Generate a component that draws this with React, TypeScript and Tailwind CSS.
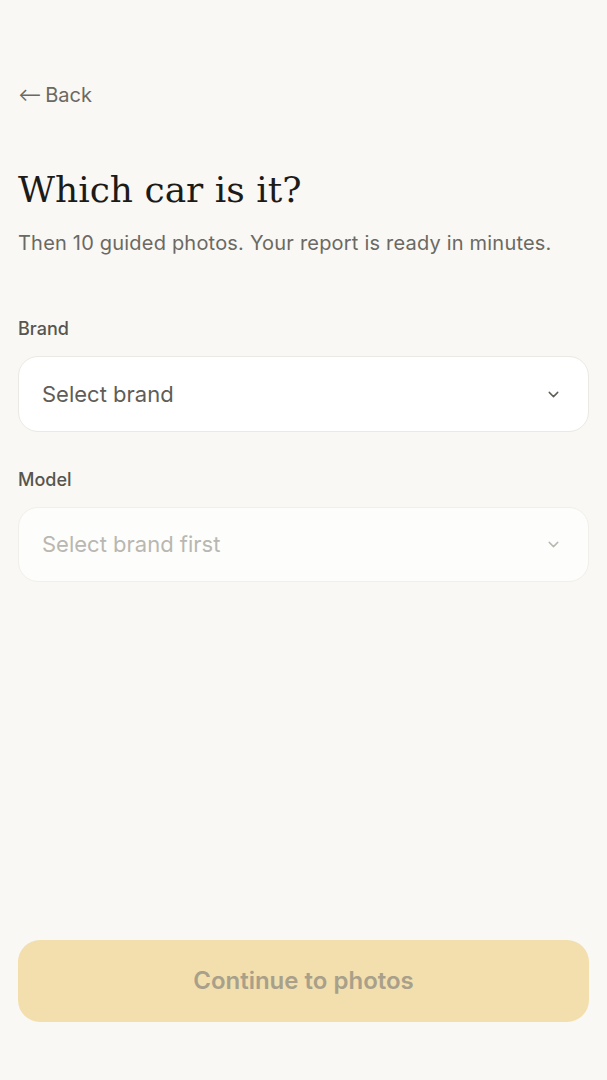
import React from "react";

function Chevron({ className }: { className: string }) {
  return (
    <svg viewBox="0 0 24 24" width="17" height="17" fill="none" stroke="currentColor" strokeWidth="2" strokeLinecap="round" strokeLinejoin="round" className={className}>
      <path d="M6 9l6 6 6-6" />
    </svg>
  );
}

export default function App() {
  return (
    <div className="min-h-[1080px] w-full bg-[#f9f8f5] flex flex-col px-[18px] pb-[58px]" style={{ fontFamily: "Inter, 'Noto Sans', sans-serif" }}>
      <div className="pt-[83px] flex items-center gap-[3px] text-[20px] leading-[24px] text-[#6b6962]">
        <span className="text-[18px]">⟵</span>
        <span>Back</span>
      </div>
      <h1 className="mt-[59px] text-[36px] leading-[48px] text-[#1c1b18]" style={{ fontFamily: "'DejaVu Serif', 'Liberation Serif', serif" }}>
        Which car is it?
      </h1>
      <p className="mt-[15px] text-[20px] leading-[28px] tracking-[0.01em] text-[#6b6962]">
        Then 10 guided photos. Your report is ready in minutes.
      </p>
      <label className="mt-[60px] text-[18px] leading-[24px] font-medium text-[#57554f]">Brand</label>
      <div className="mt-[15px] h-[76px] rounded-[20px] bg-white border border-[#ebe9e3] flex items-center justify-between pl-[23px] pr-[26px]">
        <span className="text-[22px] text-[#5f5d57]">Select brand</span>
        <Chevron className="text-[#5f5d57]" />
      </div>
      <label className="mt-[36px] text-[18px] leading-[24px] font-medium text-[#57554f]">Model</label>
      <div className="mt-[15px] h-[75px] rounded-[20px] bg-[#fdfdfb] border border-[#f1efea] flex items-center justify-between pl-[23px] pr-[26px]">
        <span className="text-[22px] text-[#b9b7b1]">Select brand first</span>
        <Chevron className="text-[#b9b7b1]" />
      </div>
      <div className="flex-1" />
      <button className="h-[82px] rounded-[22px] bg-[#f2dfad] text-[24px] font-semibold text-[#a8a08a] flex items-center justify-center">
        Continue to photos
      </button>
    </div>
  );
}
